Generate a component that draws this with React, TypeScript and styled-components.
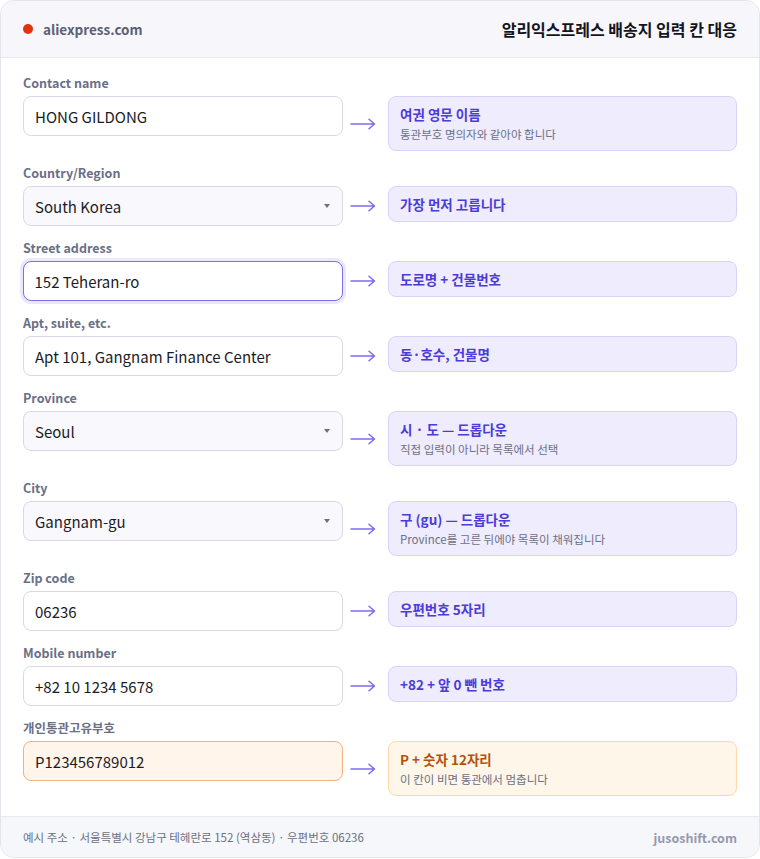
import React from "react";
import styled, { createGlobalStyle, css } from "styled-components";

const GlobalStyle = createGlobalStyle`
  * { box-sizing: border-box; }
  body {
    margin: 0;
    background: #ffffff;
    font-family: "Noto Sans CJK KR", "Noto Sans", sans-serif;
    -webkit-font-smoothing: antialiased;
  }
`;

const Card = styled.div`
  width: 760px;
  border: 1px solid #e4e4ec;
  border-radius: 14px;
  overflow: hidden;
  background: #ffffff;
`;

const Header = styled.header`
  height: 57px;
  display: flex;
  align-items: center;
  justify-content: space-between;
  padding: 0 22px;
  background: #f7f7fb;
  border-bottom: 1px solid #e8e8f0;
`;

const Site = styled.div`
  display: flex;
  align-items: center;
  gap: 10px;
  font-size: 13.5px;
  font-weight: 600;
  color: #5c6075;
`;

const Dot = styled.span`
  width: 10px;
  height: 10px;
  border-radius: 50%;
  background: #e3320f;
`;

const Title = styled.h1`
  margin: 0;
  font-size: 16px;
  font-weight: 700;
  color: #14141c;
`;

const Body = styled.main`
  display: flex;
  flex-direction: column;
  gap: 14px;
  padding: 17px 22px 20px;
`;

const Row = styled.div`
  display: grid;
  grid-template-columns: 320px 45px 1fr;
  grid-template-rows: auto auto;
  align-items: start;
`;

const Label = styled.label`
  grid-column: 1;
  font-size: 12.5px;
  line-height: 15px;
  font-weight: 600;
  color: #6a6f86;
  margin-bottom: 6px;
`;

type Kind = "text" | "select" | "focus" | "warn";

const Field = styled.div<{ $kind: Kind }>`
  grid-column: 1;
  grid-row: 2;
  position: relative;
  height: 40px;
  display: flex;
  align-items: center;
  padding: 0 11px;
  border: 1px solid #d9d8e6;
  border-radius: 8px;
  background: #ffffff;
  font-size: 15px;
  color: #1b1b26;

  ${({ $kind }) =>
    $kind === "select" &&
    css`
      background: #f8f8fd;
    `}

  ${({ $kind }) =>
    $kind === "focus" &&
    css`
      border: 1.5px solid #7b6cf0;
      padding: 0 10.5px;
      box-shadow: 0 0 0 3px #ebe8fd;
    `}

  ${({ $kind }) =>
    $kind === "warn" &&
    css`
      background: #fff5eb;
      border-color: #f2b47a;
    `}
`;

/* small dropdown triangle on the right of a select */
const Caret = styled.span`
  position: absolute;
  right: 12px;
  top: 50%;
  margin-top: -2px;
  width: 0;
  height: 0;
  border-left: 3px solid transparent;
  border-right: 3px solid transparent;
  border-top: 4px solid #6b7085;
`;

const ArrowCell = styled.div`
  grid-column: 2;
  grid-row: 2;
  align-self: center;
  display: flex;
  padding-left: 7px;
`;

const Hint = styled.div<{ $warn?: boolean }>`
  grid-column: 3;
  grid-row: 2;
  display: flex;
  flex-direction: column;
  justify-content: center;
  min-height: 36px;
  padding: 7px 12px 7px 11px;
  border: 1px solid ${({ $warn }) => ($warn ? "#fdd8a8" : "#d9d3f9")};
  border-radius: 8px;
  background: ${({ $warn }) => ($warn ? "#fff6ea" : "#efecfe")};
`;

const HintTitle = styled.div<{ $warn?: boolean }>`
  font-size: 13.5px;
  line-height: 20px;
  font-weight: 700;
  color: ${({ $warn }) => ($warn ? "#b4510c" : "#4b3bd8")};
`;

const HintNote = styled.div`
  margin-top: 2px;
  font-size: 11.5px;
  line-height: 17px;
  color: #6b7085;
`;

const Footer = styled.footer`
  height: 41px;
  display: flex;
  align-items: center;
  justify-content: space-between;
  padding: 0 22px;
  background: #f6f7fa;
  border-top: 1px solid #e8e8f0;
`;

const FootNote = styled.span`
  font-size: 11.5px;
  color: #6b7085;
`;

const FootBrand = styled.span`
  font-size: 12.5px;
  font-weight: 600;
  color: #9599ad;
`;

const Arrow = () => (
  <svg width="26" height="12" viewBox="0 0 26 12" fill="none">
    <path
      d="M1 6H24.5M19 1.2L24.5 6L19 10.8"
      stroke="#7b6cf0"
      strokeWidth="1.5"
      strokeLinecap="round"
      strokeLinejoin="round"
    />
  </svg>
);

type FieldRow = {
  label: string;
  value: string;
  kind: Kind;
  hint: string;
  note?: string;
};

const rows: FieldRow[] = [
  {
    label: "Contact name",
    value: "HONG GILDONG",
    kind: "text",
    hint: "여권 영문 이름",
    note: "통관부호 명의자와 같아야 합니다",
  },
  { label: "Country/Region", value: "South Korea", kind: "select", hint: "가장 먼저 고릅니다" },
  { label: "Street address", value: "152 Teheran-ro", kind: "focus", hint: "도로명 + 건물번호" },
  {
    label: "Apt, suite, etc.",
    value: "Apt 101, Gangnam Finance Center",
    kind: "text",
    hint: "동·호수, 건물명",
  },
  {
    label: "Province",
    value: "Seoul",
    kind: "select",
    hint: "시 · 도 — 드롭다운",
    note: "직접 입력이 아니라 목록에서 선택",
  },
  {
    label: "City",
    value: "Gangnam-gu",
    kind: "select",
    hint: "구 (gu) — 드롭다운",
    note: "Province를 고른 뒤에야 목록이 채워집니다",
  },
  { label: "Zip code", value: "06236", kind: "text", hint: "우편번호 5자리" },
  { label: "Mobile number", value: "+82 10 1234 5678", kind: "text", hint: "+82 + 앞 0 뺀 번호" },
  {
    label: "개인통관고유부호",
    value: "P123456789012",
    kind: "warn",
    hint: "P + 숫자 12자리",
    note: "이 칸이 비면 통관에서 멈춥니다",
  },
];

export default function App() {
  return (
    <>
      <GlobalStyle />
      <Card>
        <Header>
          <Site>
            <Dot />
            aliexpress.com
          </Site>
          <Title>알리익스프레스 배송지 입력 칸 대응</Title>
        </Header>

        <Body>
          {rows.map((r) => {
            const warn = r.kind === "warn";
            return (
              <Row key={r.label}>
                <Label>{r.label}</Label>
                <Field $kind={r.kind}>
                  {r.value}
                  {r.kind === "select" && <Caret />}
                </Field>
                <ArrowCell>
                  <Arrow />
                </ArrowCell>
                <Hint $warn={warn}>
                  <HintTitle $warn={warn}>{r.hint}</HintTitle>
                  {r.note && <HintNote>{r.note}</HintNote>}
                </Hint>
              </Row>
            );
          })}
        </Body>

        <Footer>
          <FootNote>예시 주소 · 서울특별시 강남구 테헤란로 152 (역삼동) · 우편번호 06236</FootNote>
          <FootBrand>jusoshift.com</FootBrand>
        </Footer>
      </Card>
    </>
  );
}
